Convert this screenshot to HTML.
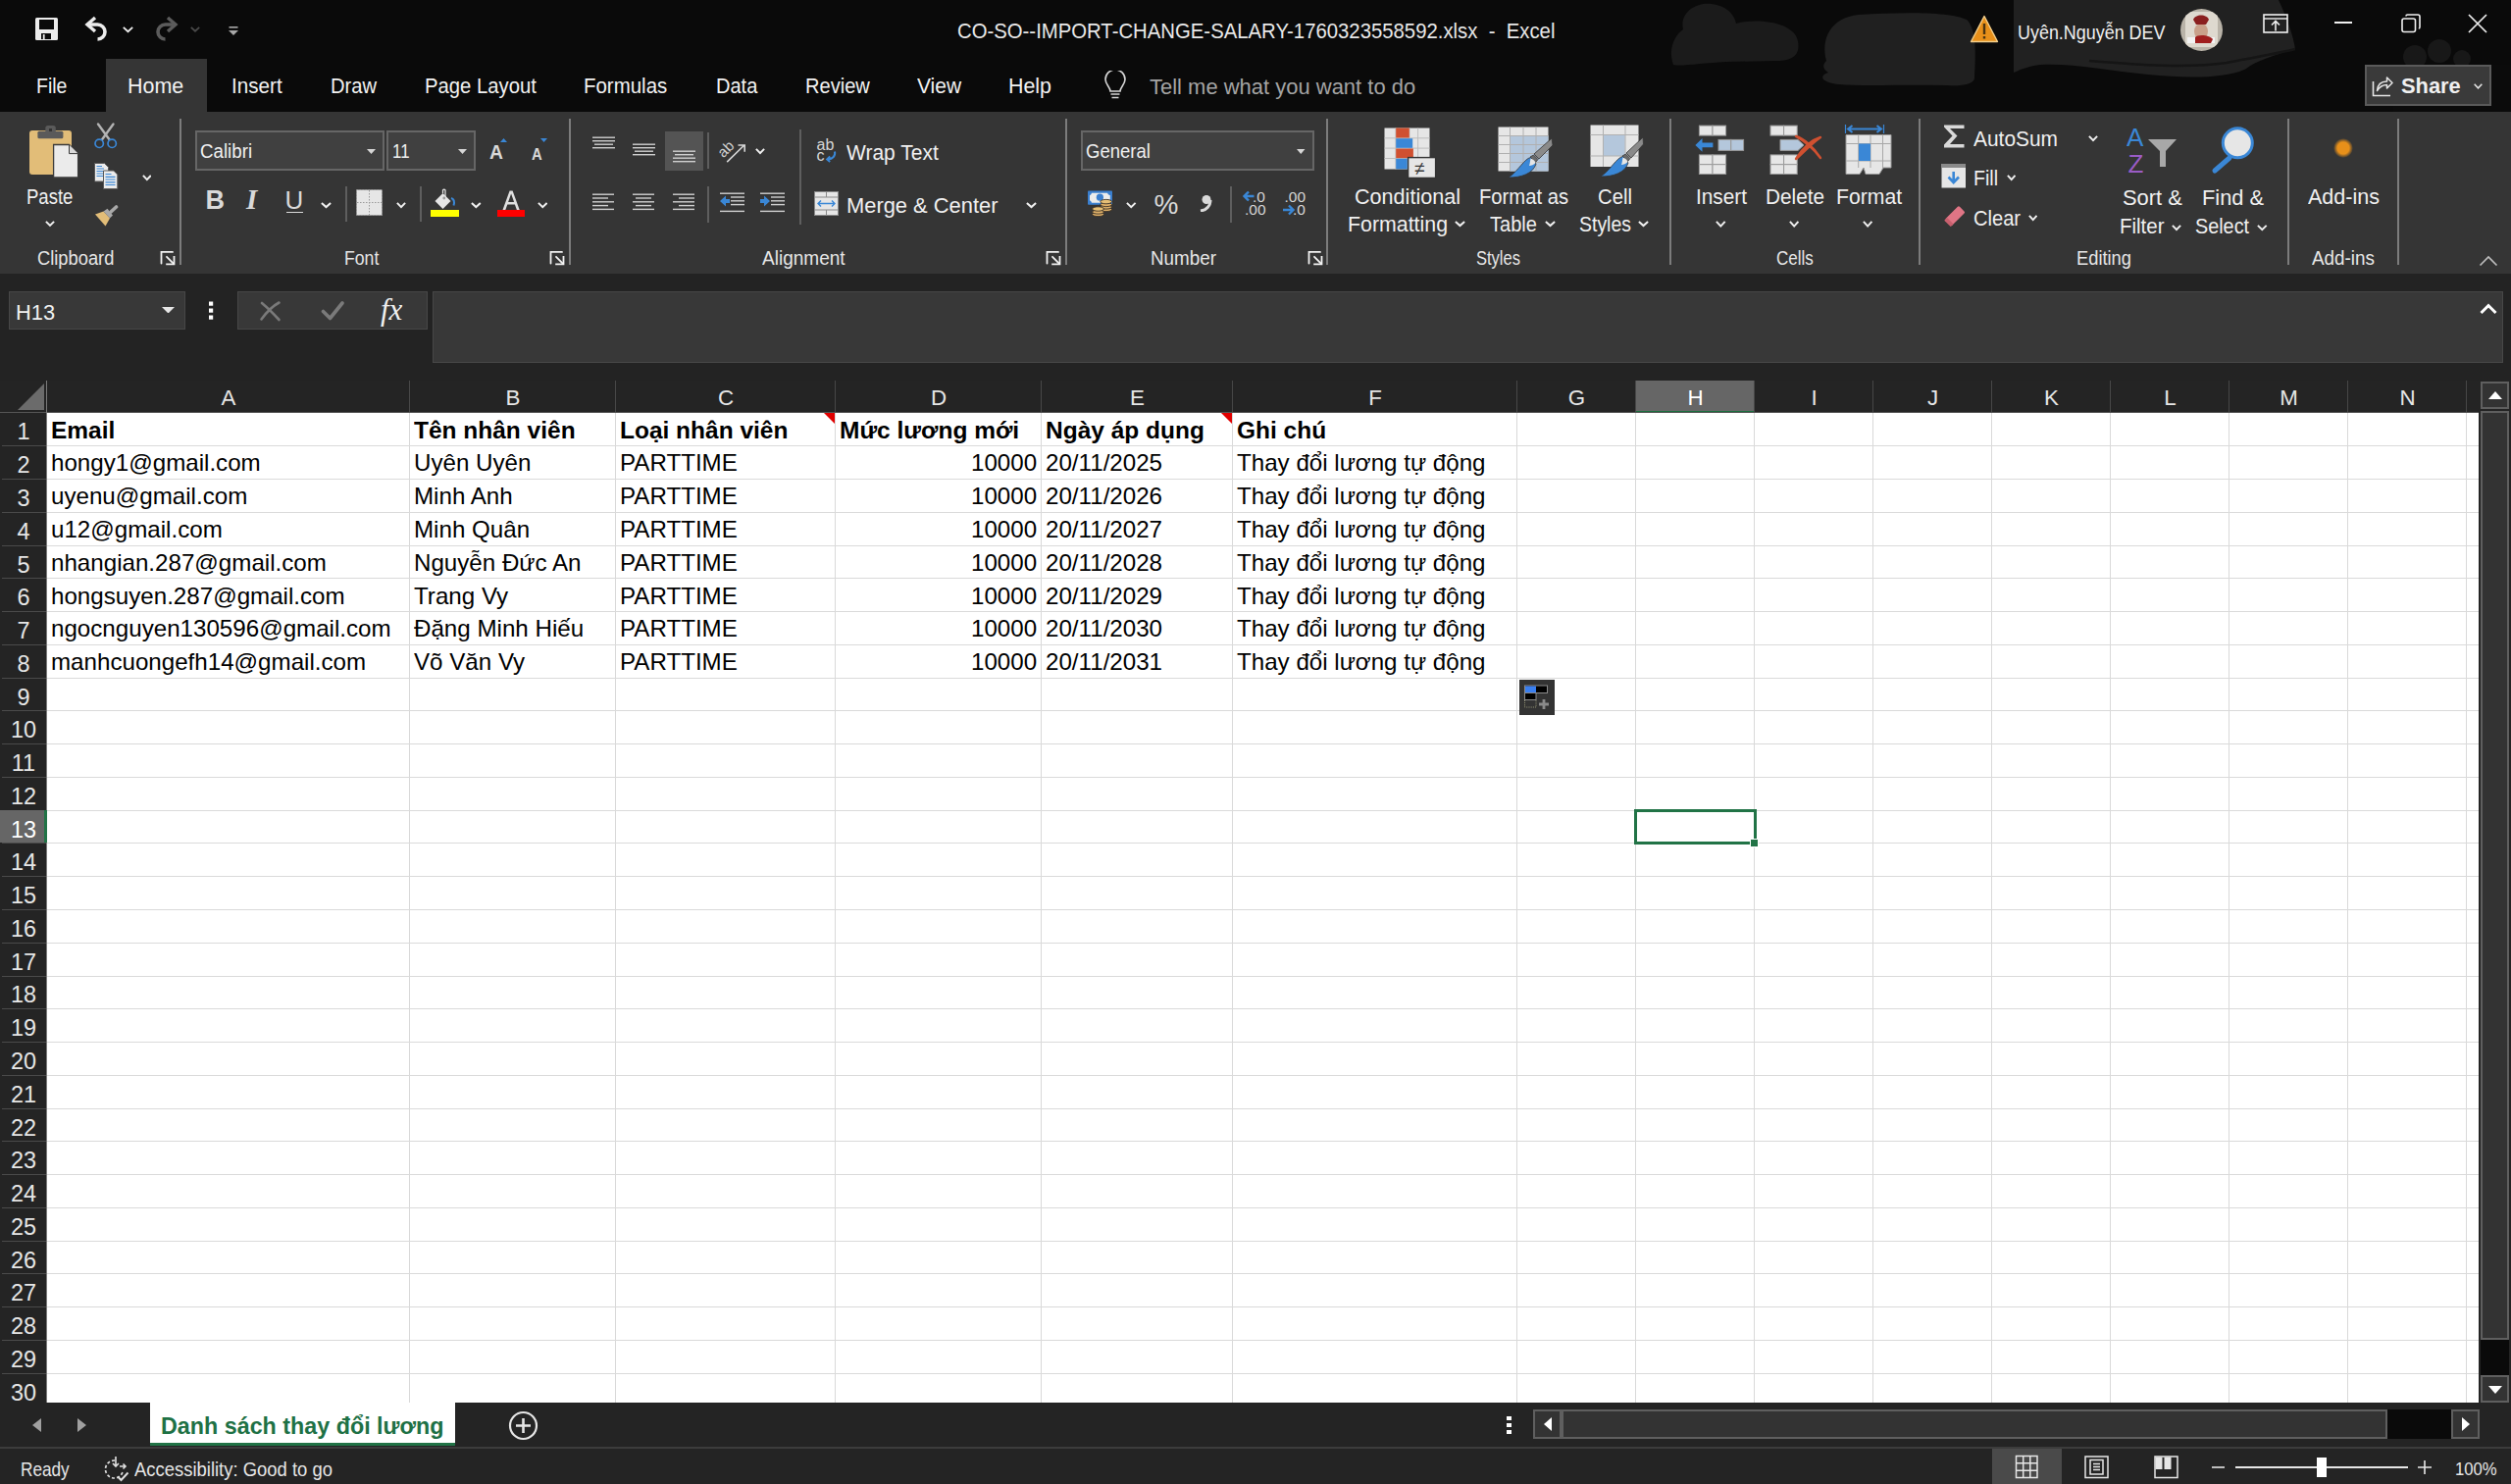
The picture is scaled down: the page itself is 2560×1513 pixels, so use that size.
<!DOCTYPE html><html><head><meta charset="utf-8"><style>
html,body{margin:0;padding:0;width:2560px;height:1513px;overflow:hidden;background:#0a0a0a;font-family:"Liberation Sans", sans-serif;}
body>div,body>svg{position:absolute;}
.t{position:absolute;white-space:pre;line-height:1;transform-origin:0 0;}
</style></head><body>
<div style="left:0px;top:0px;width:2560px;height:114px;background:#0a0a0a;"></div>
<svg style="left:1690px;top:0px" width="870" height="114" viewBox="0 0 870 114">
<path d="M16 66 C10 50 18 35 26 30 C22 12 40 2 55 4 C70 6 78 14 80 24 C100 18 140 22 143 42 C146 58 135 62 120 62 L70 63 C45 64 25 68 16 66 Z" fill="#1b1b1b"/>
<path d="M172 62 C166 40 176 18 205 15 C250 12 300 12 315 20 C326 30 324 60 323 80 C322 86 310 88 295 87 C250 86 210 88 185 86 C170 85 162 78 174 74 C168 70 168 66 172 62 Z" fill="#202020"/>
<path d="M363 0 L633 0 C640 15 648 35 650 50 C630 56 610 62 600 70 C580 80 540 80 500 76 C460 72 420 64 390 66 C375 68 368 72 363 74 Z" fill="#212121"/>
<path d="M440 62 C490 66 540 70 580 64 C610 58 635 54 650 50" stroke="#151515" stroke-width="2.5" fill="none"/>
<circle cx="772" cy="58" r="12" fill="#181818"/><circle cx="797" cy="52" r="12" fill="#181818"/><circle cx="820" cy="60" r="9" fill="#181818"/>
<rect x="750" y="66" width="120" height="48" fill="#0b0b0b"/>
</svg>
<div style="left:108px;top:60px;width:103px;height:54px;background:#353535;"></div>
<div style="left:0px;top:114px;width:2560px;height:165px;background:#353535;"></div>
<div style="left:0px;top:279px;width:2560px;height:109px;background:#232323;"></div>
<div class="t" style="left:976.00px;top:21.42px;font-size:21.74px;color:#e8e8e8;font-weight:400;transform:scaleX(0.9349);">CO-SO--IMPORT-CHANGE-SALARY-1760323558592.xlsx  -  Excel</div>
<div class="t" style="left:2057.00px;top:21.74px;font-size:21.01px;color:#f0f0f0;font-weight:400;transform:scaleX(0.8538);">Uyên.Nguyễn DEV</div>
<div class="t" style="left:36.50px;top:77.08px;font-size:22.61px;color:#f2f2f2;font-weight:400;transform:scaleX(0.8625);">File</div>
<div class="t" style="left:129.80px;top:77.08px;font-size:22.61px;color:#f2f2f2;font-weight:400;transform:scaleX(0.9489);">Home</div>
<div class="t" style="left:236.40px;top:77.08px;font-size:22.61px;color:#f2f2f2;font-weight:400;transform:scaleX(0.9130);">Insert</div>
<div class="t" style="left:337.00px;top:77.08px;font-size:22.61px;color:#f2f2f2;font-weight:400;transform:scaleX(0.8913);">Draw</div>
<div class="t" style="left:433.00px;top:77.08px;font-size:22.61px;color:#f2f2f2;font-weight:400;transform:scaleX(0.8968);">Page Layout</div>
<div class="t" style="left:595.40px;top:77.08px;font-size:22.61px;color:#f2f2f2;font-weight:400;transform:scaleX(0.9047);">Formulas</div>
<div class="t" style="left:729.70px;top:77.08px;font-size:22.61px;color:#f2f2f2;font-weight:400;transform:scaleX(0.8862);">Data</div>
<div class="t" style="left:821.00px;top:77.08px;font-size:22.61px;color:#f2f2f2;font-weight:400;transform:scaleX(0.8881);">Review</div>
<div class="t" style="left:935.00px;top:77.08px;font-size:22.61px;color:#f2f2f2;font-weight:400;transform:scaleX(0.9263);">View</div>
<div class="t" style="left:1028.00px;top:77.08px;font-size:22.61px;color:#f2f2f2;font-weight:400;transform:scaleX(0.9469);">Help</div>
<div class="t" style="left:1171.50px;top:77.58px;font-size:22.61px;color:#a4a4a4;font-weight:400;transform:scaleX(0.9720);">Tell me what you want to do</div>
<div style="left:183px;top:121px;width:2px;height:149px;background:#7c7c7c;"></div>
<div style="left:580px;top:121px;width:2px;height:149px;background:#7c7c7c;"></div>
<div style="left:1086px;top:121px;width:2px;height:149px;background:#7c7c7c;"></div>
<div style="left:1352px;top:121px;width:2px;height:149px;background:#7c7c7c;"></div>
<div style="left:1702px;top:121px;width:2px;height:149px;background:#7c7c7c;"></div>
<div style="left:1956px;top:121px;width:2px;height:149px;background:#7c7c7c;"></div>
<div style="left:2332px;top:121px;width:2px;height:149px;background:#7c7c7c;"></div>
<div style="left:2444px;top:121px;width:2px;height:149px;background:#7c7c7c;"></div>
<div class="t" style="left:37.60px;top:253.75px;font-size:19.71px;color:#e6e6e6;font-weight:400;transform:scaleX(0.9295);">Clipboard</div>
<div class="t" style="left:350.60px;top:253.75px;font-size:19.71px;color:#e6e6e6;font-weight:400;transform:scaleX(0.8976);">Font</div>
<div class="t" style="left:776.60px;top:253.75px;font-size:19.71px;color:#e6e6e6;font-weight:400;transform:scaleX(0.9666);">Alignment</div>
<div class="t" style="left:1173.00px;top:253.75px;font-size:19.71px;color:#e6e6e6;font-weight:400;transform:scaleX(0.9561);">Number</div>
<div class="t" style="left:1505.00px;top:253.75px;font-size:19.71px;color:#e6e6e6;font-weight:400;transform:scaleX(0.8387);">Styles</div>
<div class="t" style="left:1810.50px;top:253.75px;font-size:19.71px;color:#e6e6e6;font-weight:400;transform:scaleX(0.8631);">Cells</div>
<div class="t" style="left:2117.00px;top:253.75px;font-size:19.71px;color:#e6e6e6;font-weight:400;transform:scaleX(0.9295);">Editing</div>
<div class="t" style="left:2357.00px;top:253.75px;font-size:19.71px;color:#e6e6e6;font-weight:400;transform:scaleX(0.9579);">Add-ins</div>
<div class="t" style="left:27.40px;top:190.31px;font-size:22.46px;color:#f0f0f0;font-weight:400;transform:scaleX(0.8255);">Paste</div>
<div class="t" style="left:863.00px;top:145.42px;font-size:21.74px;color:#f0f0f0;font-weight:400;transform:scaleX(0.9661);">Wrap Text</div>
<div class="t" style="left:863.30px;top:199.22px;font-size:21.74px;color:#f0f0f0;font-weight:400;transform:scaleX(1.0071);">Merge &amp; Center</div>
<div class="t" style="left:1381.00px;top:189.81px;font-size:22.46px;color:#f0f0f0;font-weight:400;transform:scaleX(0.9613);">Conditional</div>
<div class="t" style="left:1374.00px;top:218.31px;font-size:22.46px;color:#f0f0f0;font-weight:400;transform:scaleX(0.9505);">Formatting</div>
<div class="t" style="left:1508.00px;top:189.81px;font-size:22.46px;color:#f0f0f0;font-weight:400;transform:scaleX(0.9004);">Format as</div>
<div class="t" style="left:1518.70px;top:218.31px;font-size:22.46px;color:#f0f0f0;font-weight:400;transform:scaleX(0.8922);">Table</div>
<div class="t" style="left:1629.00px;top:189.81px;font-size:22.46px;color:#f0f0f0;font-weight:400;transform:scaleX(0.9047);">Cell</div>
<div class="t" style="left:1610.00px;top:218.31px;font-size:22.46px;color:#f0f0f0;font-weight:400;transform:scaleX(0.8666);">Styles</div>
<div class="t" style="left:1729.00px;top:190.42px;font-size:21.74px;color:#f0f0f0;font-weight:400;transform:scaleX(0.9571);">Insert</div>
<div class="t" style="left:1800.00px;top:190.42px;font-size:21.74px;color:#f0f0f0;font-weight:400;transform:scaleX(0.9557);">Delete</div>
<div class="t" style="left:1872.00px;top:190.42px;font-size:21.74px;color:#f0f0f0;font-weight:400;transform:scaleX(0.9739);">Format</div>
<div class="t" style="left:2012.00px;top:130.88px;font-size:22.03px;color:#f0f0f0;font-weight:400;transform:scaleX(0.9496);">AutoSum</div>
<div class="t" style="left:2012.00px;top:171.42px;font-size:21.74px;color:#f0f0f0;font-weight:400;transform:scaleX(0.9009);">Fill</div>
<div class="t" style="left:2012.00px;top:212.42px;font-size:21.74px;color:#f0f0f0;font-weight:400;transform:scaleX(0.9247);">Clear</div>
<div class="t" style="left:2164.00px;top:191.11px;font-size:21.16px;color:#f0f0f0;font-weight:400;transform:scaleX(1.0349);">Sort &amp;</div>
<div class="t" style="left:2161.00px;top:219.81px;font-size:21.16px;color:#f0f0f0;font-weight:400;transform:scaleX(0.9684);">Filter</div>
<div class="t" style="left:2245.00px;top:191.11px;font-size:21.16px;color:#f0f0f0;font-weight:400;transform:scaleX(1.0309);">Find &amp;</div>
<div class="t" style="left:2237.50px;top:219.81px;font-size:21.16px;color:#f0f0f0;font-weight:400;transform:scaleX(0.9359);">Select</div>
<div class="t" style="left:2353.00px;top:190.18px;font-size:22.03px;color:#f0f0f0;font-weight:400;transform:scaleX(0.9778);">Add-ins</div>
<div style="left:9px;top:297px;width:180px;height:39px;background:#383838;box-sizing:border-box;border:1px solid #474747;"></div>
<div class="t" style="left:16.20px;top:307.52px;font-size:21.74px;color:#f0f0f0;font-weight:400;transform:scaleX(1.0039);">H13</div>
<div style="left:242px;top:297px;width:194px;height:39px;background:#383838;box-sizing:border-box;border:1px solid #474747;"></div>
<div style="left:441px;top:297px;width:2111px;height:73px;background:#383838;box-sizing:border-box;border:1px solid #474747;"></div>
<div style="left:0px;top:388px;width:2527px;height:33px;background:#242424;"></div>
<div style="left:1667px;top:388px;width:121px;height:33px;background:#666666;"></div>
<div style="left:1667px;top:388px;width:1px;height:31px;background:#8c8c8c;"></div>
<div style="left:1667px;top:419px;width:121px;height:2px;background:#1b6e3e;"></div>
<div class="t" style="left:225.56px;top:394.83px;font-size:22.32px;color:#e6e6e6;font-weight:400;">A</div>
<div class="t" style="left:515.56px;top:394.83px;font-size:22.32px;color:#e6e6e6;font-weight:400;">B</div>
<div class="t" style="left:731.95px;top:394.83px;font-size:22.32px;color:#e6e6e6;font-weight:400;">C</div>
<div class="t" style="left:948.95px;top:394.83px;font-size:22.32px;color:#e6e6e6;font-weight:400;">D</div>
<div class="t" style="left:1152.06px;top:394.83px;font-size:22.32px;color:#e6e6e6;font-weight:400;">E</div>
<div class="t" style="left:1395.19px;top:394.83px;font-size:22.32px;color:#e6e6e6;font-weight:400;">F</div>
<div class="t" style="left:1598.83px;top:394.83px;font-size:22.32px;color:#e6e6e6;font-weight:400;">G</div>
<div class="t" style="left:1720.45px;top:394.83px;font-size:22.32px;color:#ffffff;font-weight:400;">H</div>
<div class="t" style="left:1846.40px;top:394.83px;font-size:22.32px;color:#e6e6e6;font-weight:400;">I</div>
<div class="t" style="left:1964.92px;top:394.83px;font-size:22.32px;color:#e6e6e6;font-weight:400;">J</div>
<div class="t" style="left:2084.06px;top:394.83px;font-size:22.32px;color:#e6e6e6;font-weight:400;">K</div>
<div class="t" style="left:2206.30px;top:394.83px;font-size:22.32px;color:#e6e6e6;font-weight:400;">L</div>
<div class="t" style="left:2324.21px;top:394.83px;font-size:22.32px;color:#e6e6e6;font-weight:400;">M</div>
<div class="t" style="left:2446.45px;top:394.83px;font-size:22.32px;color:#e6e6e6;font-weight:400;">N</div>
<svg style="left:0px;top:388px;" width="2527" height="33" viewBox="0 0 2527 33"><rect x="417" y="0" width="1" height="33" fill="#474747"/><rect x="627" y="0" width="1" height="33" fill="#474747"/><rect x="851" y="0" width="1" height="33" fill="#474747"/><rect x="1061" y="0" width="1" height="33" fill="#474747"/><rect x="1256" y="0" width="1" height="33" fill="#474747"/><rect x="1546" y="0" width="1" height="33" fill="#474747"/><rect x="1667" y="0" width="1" height="33" fill="#474747"/><rect x="1788" y="0" width="1" height="33" fill="#474747"/><rect x="1909" y="0" width="1" height="33" fill="#474747"/><rect x="2030" y="0" width="1" height="33" fill="#474747"/><rect x="2151" y="0" width="1" height="33" fill="#474747"/><rect x="2272" y="0" width="1" height="33" fill="#474747"/><rect x="2393" y="0" width="1" height="33" fill="#474747"/><rect x="2514" y="0" width="1" height="33" fill="#474747"/></svg>
<div style="left:0px;top:420px;width:2527px;height:1px;background:#555555;"></div>
<svg style="left:18px;top:391px;" width="27" height="27" viewBox="0 0 27 27"><path d="M27 0 L27 27 L0 27 Z" fill="#6b6b6b"/></svg>
<div style="left:48px;top:421px;width:2479px;height:1009px;background:#ffffff;"></div>
<svg style="left:48px;top:421px;" width="2479" height="1009" viewBox="0 0 2479 1009"><rect x="369" y="0" width="1" height="1009" fill="#d9d9d9"/><rect x="579" y="0" width="1" height="1009" fill="#d9d9d9"/><rect x="803" y="0" width="1" height="1009" fill="#d9d9d9"/><rect x="1013" y="0" width="1" height="1009" fill="#d9d9d9"/><rect x="1208" y="0" width="1" height="1009" fill="#d9d9d9"/><rect x="1498" y="0" width="1" height="1009" fill="#d9d9d9"/><rect x="1619" y="0" width="1" height="1009" fill="#d9d9d9"/><rect x="1740" y="0" width="1" height="1009" fill="#d9d9d9"/><rect x="1861" y="0" width="1" height="1009" fill="#d9d9d9"/><rect x="1982" y="0" width="1" height="1009" fill="#d9d9d9"/><rect x="2103" y="0" width="1" height="1009" fill="#d9d9d9"/><rect x="2224" y="0" width="1" height="1009" fill="#d9d9d9"/><rect x="2345" y="0" width="1" height="1009" fill="#d9d9d9"/><rect x="2466" y="0" width="1" height="1009" fill="#d9d9d9"/><rect x="0" y="33" width="2479" height="1" fill="#dadada"/><rect x="0" y="67" width="2479" height="1" fill="#dadada"/><rect x="0" y="101" width="2479" height="1" fill="#dadada"/><rect x="0" y="135" width="2479" height="1" fill="#dadada"/><rect x="0" y="168" width="2479" height="1" fill="#dadada"/><rect x="0" y="202" width="2479" height="1" fill="#dadada"/><rect x="0" y="236" width="2479" height="1" fill="#dadada"/><rect x="0" y="270" width="2479" height="1" fill="#dadada"/><rect x="0" y="303" width="2479" height="1" fill="#dadada"/><rect x="0" y="337" width="2479" height="1" fill="#dadada"/><rect x="0" y="371" width="2479" height="1" fill="#dadada"/><rect x="0" y="405" width="2479" height="1" fill="#dadada"/><rect x="0" y="438" width="2479" height="1" fill="#dadada"/><rect x="0" y="472" width="2479" height="1" fill="#dadada"/><rect x="0" y="506" width="2479" height="1" fill="#dadada"/><rect x="0" y="540" width="2479" height="1" fill="#dadada"/><rect x="0" y="574" width="2479" height="1" fill="#dadada"/><rect x="0" y="607" width="2479" height="1" fill="#dadada"/><rect x="0" y="641" width="2479" height="1" fill="#dadada"/><rect x="0" y="675" width="2479" height="1" fill="#dadada"/><rect x="0" y="709" width="2479" height="1" fill="#dadada"/><rect x="0" y="742" width="2479" height="1" fill="#dadada"/><rect x="0" y="776" width="2479" height="1" fill="#dadada"/><rect x="0" y="810" width="2479" height="1" fill="#dadada"/><rect x="0" y="844" width="2479" height="1" fill="#dadada"/><rect x="0" y="877" width="2479" height="1" fill="#dadada"/><rect x="0" y="911" width="2479" height="1" fill="#dadada"/><rect x="0" y="945" width="2479" height="1" fill="#dadada"/><rect x="0" y="979" width="2479" height="1" fill="#dadada"/></svg>
<div style="left:0px;top:421px;width:47px;height:1009px;background:#242424;"></div>
<div style="left:47px;top:388px;width:1px;height:1042px;background:#7a7a7a;"></div>
<svg style="left:0px;top:421px;" width="47" height="1009" viewBox="0 0 47 1009"><rect x="2" y="33" width="45" height="1" fill="#4a4a4a"/><rect x="2" y="67" width="45" height="1" fill="#4a4a4a"/><rect x="2" y="101" width="45" height="1" fill="#4a4a4a"/><rect x="2" y="135" width="45" height="1" fill="#4a4a4a"/><rect x="2" y="168" width="45" height="1" fill="#4a4a4a"/><rect x="2" y="202" width="45" height="1" fill="#4a4a4a"/><rect x="2" y="236" width="45" height="1" fill="#4a4a4a"/><rect x="2" y="270" width="45" height="1" fill="#4a4a4a"/><rect x="2" y="303" width="45" height="1" fill="#4a4a4a"/><rect x="2" y="337" width="45" height="1" fill="#4a4a4a"/><rect x="2" y="371" width="45" height="1" fill="#4a4a4a"/><rect x="2" y="405" width="45" height="1" fill="#4a4a4a"/><rect x="2" y="438" width="45" height="1" fill="#4a4a4a"/><rect x="2" y="472" width="45" height="1" fill="#4a4a4a"/><rect x="2" y="506" width="45" height="1" fill="#4a4a4a"/><rect x="2" y="540" width="45" height="1" fill="#4a4a4a"/><rect x="2" y="574" width="45" height="1" fill="#4a4a4a"/><rect x="2" y="607" width="45" height="1" fill="#4a4a4a"/><rect x="2" y="641" width="45" height="1" fill="#4a4a4a"/><rect x="2" y="675" width="45" height="1" fill="#4a4a4a"/><rect x="2" y="709" width="45" height="1" fill="#4a4a4a"/><rect x="2" y="742" width="45" height="1" fill="#4a4a4a"/><rect x="2" y="776" width="45" height="1" fill="#4a4a4a"/><rect x="2" y="810" width="45" height="1" fill="#4a4a4a"/><rect x="2" y="844" width="45" height="1" fill="#4a4a4a"/><rect x="2" y="877" width="45" height="1" fill="#4a4a4a"/><rect x="2" y="911" width="45" height="1" fill="#4a4a4a"/><rect x="2" y="945" width="45" height="1" fill="#4a4a4a"/><rect x="2" y="979" width="45" height="1" fill="#4a4a4a"/></svg>
<div style="left:0px;top:826px;width:45px;height:33px;background:#666666;"></div>
<div style="left:45px;top:826px;width:3px;height:33px;background:#217346;"></div>
<div class="t" style="left:17.47px;top:429.44px;font-size:23.48px;color:#e6e6e6;font-weight:400;">1</div>
<div class="t" style="left:17.47px;top:463.21px;font-size:23.48px;color:#e6e6e6;font-weight:400;">2</div>
<div class="t" style="left:17.47px;top:496.98px;font-size:23.48px;color:#e6e6e6;font-weight:400;">3</div>
<div class="t" style="left:17.47px;top:530.74px;font-size:23.48px;color:#e6e6e6;font-weight:400;">4</div>
<div class="t" style="left:17.47px;top:564.51px;font-size:23.48px;color:#e6e6e6;font-weight:400;">5</div>
<div class="t" style="left:17.47px;top:598.27px;font-size:23.48px;color:#e6e6e6;font-weight:400;">6</div>
<div class="t" style="left:17.47px;top:632.04px;font-size:23.48px;color:#e6e6e6;font-weight:400;">7</div>
<div class="t" style="left:17.47px;top:665.81px;font-size:23.48px;color:#e6e6e6;font-weight:400;">8</div>
<div class="t" style="left:17.47px;top:699.57px;font-size:23.48px;color:#e6e6e6;font-weight:400;">9</div>
<div class="t" style="left:10.95px;top:733.34px;font-size:23.48px;color:#e6e6e6;font-weight:400;">10</div>
<div class="t" style="left:11.81px;top:767.10px;font-size:23.48px;color:#e6e6e6;font-weight:400;">11</div>
<div class="t" style="left:10.95px;top:800.87px;font-size:23.48px;color:#e6e6e6;font-weight:400;">12</div>
<div class="t" style="left:10.95px;top:834.64px;font-size:23.48px;color:#ffffff;font-weight:400;">13</div>
<div class="t" style="left:10.95px;top:868.40px;font-size:23.48px;color:#e6e6e6;font-weight:400;">14</div>
<div class="t" style="left:10.95px;top:902.17px;font-size:23.48px;color:#e6e6e6;font-weight:400;">15</div>
<div class="t" style="left:10.95px;top:935.93px;font-size:23.48px;color:#e6e6e6;font-weight:400;">16</div>
<div class="t" style="left:10.95px;top:969.70px;font-size:23.48px;color:#e6e6e6;font-weight:400;">17</div>
<div class="t" style="left:10.95px;top:1003.47px;font-size:23.48px;color:#e6e6e6;font-weight:400;">18</div>
<div class="t" style="left:10.95px;top:1037.23px;font-size:23.48px;color:#e6e6e6;font-weight:400;">19</div>
<div class="t" style="left:10.95px;top:1071.00px;font-size:23.48px;color:#e6e6e6;font-weight:400;">20</div>
<div class="t" style="left:10.95px;top:1104.76px;font-size:23.48px;color:#e6e6e6;font-weight:400;">21</div>
<div class="t" style="left:10.95px;top:1138.53px;font-size:23.48px;color:#e6e6e6;font-weight:400;">22</div>
<div class="t" style="left:10.95px;top:1172.30px;font-size:23.48px;color:#e6e6e6;font-weight:400;">23</div>
<div class="t" style="left:10.95px;top:1206.06px;font-size:23.48px;color:#e6e6e6;font-weight:400;">24</div>
<div class="t" style="left:10.95px;top:1239.83px;font-size:23.48px;color:#e6e6e6;font-weight:400;">25</div>
<div class="t" style="left:10.95px;top:1273.59px;font-size:23.48px;color:#e6e6e6;font-weight:400;">26</div>
<div class="t" style="left:10.95px;top:1307.36px;font-size:23.48px;color:#e6e6e6;font-weight:400;">27</div>
<div class="t" style="left:10.95px;top:1341.13px;font-size:23.48px;color:#e6e6e6;font-weight:400;">28</div>
<div class="t" style="left:10.95px;top:1374.89px;font-size:23.48px;color:#e6e6e6;font-weight:400;">29</div>
<div class="t" style="left:10.95px;top:1408.66px;font-size:23.48px;color:#e6e6e6;font-weight:400;">30</div>
<div class="t" style="left:51.60px;top:426.67px;font-size:24.00px;color:#000000;font-weight:700;transform:scaleX(1.0200);">Email</div>
<div class="t" style="left:421.60px;top:426.67px;font-size:24.00px;color:#000000;font-weight:700;transform:scaleX(1.0200);">Tên nhân viên</div>
<div class="t" style="left:631.60px;top:426.67px;font-size:24.00px;color:#000000;font-weight:700;transform:scaleX(1.0200);">Loại nhân viên</div>
<div class="t" style="left:855.60px;top:426.67px;font-size:24.00px;color:#000000;font-weight:700;transform:scaleX(1.0200);">Mức lương mới</div>
<div class="t" style="left:1065.60px;top:426.67px;font-size:24.00px;color:#000000;font-weight:700;transform:scaleX(1.0200);">Ngày áp dụng</div>
<div class="t" style="left:1260.60px;top:426.67px;font-size:24.00px;color:#000000;font-weight:700;transform:scaleX(1.0200);">Ghi chú</div>
<div class="t" style="left:51.60px;top:460.43px;font-size:24.00px;color:#000000;font-weight:400;transform:scaleX(1.0060);">hongy1@gmail.com</div>
<div class="t" style="left:421.60px;top:460.43px;font-size:24.00px;color:#000000;font-weight:400;transform:scaleX(1.0060);">Uyên Uyên</div>
<div class="t" style="left:631.60px;top:460.43px;font-size:24.00px;color:#000000;font-weight:400;transform:scaleX(1.0060);">PARTTIME</div>
<div class="t" style="left:990.25px;top:460.43px;font-size:24.00px;color:#000000;font-weight:400;transform:scaleX(1.0060);">10000</div>
<div class="t" style="left:1065.60px;top:460.43px;font-size:24.00px;color:#000000;font-weight:400;transform:scaleX(1.0060);">20/11/2025</div>
<div class="t" style="left:1260.60px;top:460.43px;font-size:24.00px;color:#000000;font-weight:400;transform:scaleX(1.0060);">Thay đổi lương tự động</div>
<div class="t" style="left:51.60px;top:494.20px;font-size:24.00px;color:#000000;font-weight:400;transform:scaleX(1.0060);">uyenu@gmail.com</div>
<div class="t" style="left:421.60px;top:494.20px;font-size:24.00px;color:#000000;font-weight:400;transform:scaleX(1.0060);">Minh Anh</div>
<div class="t" style="left:631.60px;top:494.20px;font-size:24.00px;color:#000000;font-weight:400;transform:scaleX(1.0060);">PARTTIME</div>
<div class="t" style="left:990.25px;top:494.20px;font-size:24.00px;color:#000000;font-weight:400;transform:scaleX(1.0060);">10000</div>
<div class="t" style="left:1065.60px;top:494.20px;font-size:24.00px;color:#000000;font-weight:400;transform:scaleX(1.0060);">20/11/2026</div>
<div class="t" style="left:1260.60px;top:494.20px;font-size:24.00px;color:#000000;font-weight:400;transform:scaleX(1.0060);">Thay đổi lương tự động</div>
<div class="t" style="left:51.60px;top:527.96px;font-size:24.00px;color:#000000;font-weight:400;transform:scaleX(1.0060);">u12@gmail.com</div>
<div class="t" style="left:421.60px;top:527.96px;font-size:24.00px;color:#000000;font-weight:400;transform:scaleX(1.0060);">Minh Quân</div>
<div class="t" style="left:631.60px;top:527.96px;font-size:24.00px;color:#000000;font-weight:400;transform:scaleX(1.0060);">PARTTIME</div>
<div class="t" style="left:990.25px;top:527.96px;font-size:24.00px;color:#000000;font-weight:400;transform:scaleX(1.0060);">10000</div>
<div class="t" style="left:1065.60px;top:527.96px;font-size:24.00px;color:#000000;font-weight:400;transform:scaleX(1.0060);">20/11/2027</div>
<div class="t" style="left:1260.60px;top:527.96px;font-size:24.00px;color:#000000;font-weight:400;transform:scaleX(1.0060);">Thay đổi lương tự động</div>
<div class="t" style="left:51.60px;top:561.73px;font-size:24.00px;color:#000000;font-weight:400;transform:scaleX(1.0060);">nhangian.287@gmail.com</div>
<div class="t" style="left:421.60px;top:561.73px;font-size:24.00px;color:#000000;font-weight:400;transform:scaleX(1.0060);">Nguyễn Đức An</div>
<div class="t" style="left:631.60px;top:561.73px;font-size:24.00px;color:#000000;font-weight:400;transform:scaleX(1.0060);">PARTTIME</div>
<div class="t" style="left:990.25px;top:561.73px;font-size:24.00px;color:#000000;font-weight:400;transform:scaleX(1.0060);">10000</div>
<div class="t" style="left:1065.60px;top:561.73px;font-size:24.00px;color:#000000;font-weight:400;transform:scaleX(1.0060);">20/11/2028</div>
<div class="t" style="left:1260.60px;top:561.73px;font-size:24.00px;color:#000000;font-weight:400;transform:scaleX(1.0060);">Thay đổi lương tự động</div>
<div class="t" style="left:51.60px;top:595.50px;font-size:24.00px;color:#000000;font-weight:400;transform:scaleX(1.0060);">hongsuyen.287@gmail.com</div>
<div class="t" style="left:421.60px;top:595.50px;font-size:24.00px;color:#000000;font-weight:400;transform:scaleX(1.0060);">Trang Vy</div>
<div class="t" style="left:631.60px;top:595.50px;font-size:24.00px;color:#000000;font-weight:400;transform:scaleX(1.0060);">PARTTIME</div>
<div class="t" style="left:990.25px;top:595.50px;font-size:24.00px;color:#000000;font-weight:400;transform:scaleX(1.0060);">10000</div>
<div class="t" style="left:1065.60px;top:595.50px;font-size:24.00px;color:#000000;font-weight:400;transform:scaleX(1.0060);">20/11/2029</div>
<div class="t" style="left:1260.60px;top:595.50px;font-size:24.00px;color:#000000;font-weight:400;transform:scaleX(1.0060);">Thay đổi lương tự động</div>
<div class="t" style="left:51.60px;top:629.26px;font-size:24.00px;color:#000000;font-weight:400;transform:scaleX(1.0060);">ngocnguyen130596@gmail.com</div>
<div class="t" style="left:421.60px;top:629.26px;font-size:24.00px;color:#000000;font-weight:400;transform:scaleX(1.0060);">Đặng Minh Hiếu</div>
<div class="t" style="left:631.60px;top:629.26px;font-size:24.00px;color:#000000;font-weight:400;transform:scaleX(1.0060);">PARTTIME</div>
<div class="t" style="left:990.25px;top:629.26px;font-size:24.00px;color:#000000;font-weight:400;transform:scaleX(1.0060);">10000</div>
<div class="t" style="left:1065.60px;top:629.26px;font-size:24.00px;color:#000000;font-weight:400;transform:scaleX(1.0060);">20/11/2030</div>
<div class="t" style="left:1260.60px;top:629.26px;font-size:24.00px;color:#000000;font-weight:400;transform:scaleX(1.0060);">Thay đổi lương tự động</div>
<div class="t" style="left:51.60px;top:663.03px;font-size:24.00px;color:#000000;font-weight:400;transform:scaleX(1.0060);">manhcuongefh14@gmail.com</div>
<div class="t" style="left:421.60px;top:663.03px;font-size:24.00px;color:#000000;font-weight:400;transform:scaleX(1.0060);">Võ Văn Vy</div>
<div class="t" style="left:631.60px;top:663.03px;font-size:24.00px;color:#000000;font-weight:400;transform:scaleX(1.0060);">PARTTIME</div>
<div class="t" style="left:990.25px;top:663.03px;font-size:24.00px;color:#000000;font-weight:400;transform:scaleX(1.0060);">10000</div>
<div class="t" style="left:1065.60px;top:663.03px;font-size:24.00px;color:#000000;font-weight:400;transform:scaleX(1.0060);">20/11/2031</div>
<div class="t" style="left:1260.60px;top:663.03px;font-size:24.00px;color:#000000;font-weight:400;transform:scaleX(1.0060);">Thay đổi lương tự động</div>
<svg style="left:840px;top:421px;" width="11" height="11" viewBox="0 0 11 11"><path d="M0 0 L11 0 L11 11 Z" fill="#e00000"/></svg>
<svg style="left:1245px;top:421px;" width="11" height="11" viewBox="0 0 11 11"><path d="M0 0 L11 0 L11 11 Z" fill="#e00000"/></svg>
<div style="left:1666px;top:825px;width:125px;height:36px;background:transparent;box-sizing:border-box;border:3px solid #217346;"></div>
<div style="left:1785px;top:856px;width:7px;height:7px;background:#217346;outline:1px solid #fff;"></div>
<div style="left:2527px;top:388px;width:33px;height:1042px;background:#242424;"></div>
<div style="left:2529px;top:389px;width:29px;height:28px;background:#333333;box-sizing:border-box;border:2px solid #5f5f5f;"></div>
<div style="left:2529px;top:419px;width:29px;height:947px;background:#333333;box-sizing:border-box;border:2px solid #5f5f5f;"></div>
<div style="left:2529px;top:1366px;width:29px;height:36px;background:#0a0a0a;"></div>
<div style="left:2529px;top:1402px;width:29px;height:28px;background:#333333;box-sizing:border-box;border:2px solid #5f5f5f;"></div>
<svg style="left:2537px;top:399px;" width="14" height="8" viewBox="0 0 14 8"><path d="M7 0 L14 8 L0 8 Z" fill="#ffffff"/></svg>
<svg style="left:2537px;top:1413px;" width="14" height="8" viewBox="0 0 14 8"><path d="M0 0 L14 0 L7 8 Z" fill="#ffffff"/></svg>
<div style="left:0px;top:1430px;width:2560px;height:46px;background:#242424;"></div>
<div style="left:153px;top:1430px;width:311px;height:43px;background:#ffffff;"></div>
<div style="left:153px;top:1471px;width:311px;height:3px;background:#217346;"></div>
<div class="t" style="left:164.40px;top:1443.19px;font-size:23.19px;color:#1e7145;font-weight:700;transform:scaleX(1.0049);">Danh sách thay đổi lương</div>
<svg style="left:33px;top:1446px;" width="9" height="14" viewBox="0 0 9 14"><path d="M9 0 L9 14 L0 7 Z" fill="#a0a0a0"/></svg>
<svg style="left:79px;top:1446px;" width="9" height="14" viewBox="0 0 9 14"><path d="M0 0 L9 7 L0 14 Z" fill="#a0a0a0"/></svg>
<svg style="left:518px;top:1438px;" width="31" height="31" viewBox="0 0 31 31"><circle cx="15.5" cy="15.5" r="13.5" stroke="#e6e6e6" stroke-width="2.2" fill="none"/><path d="M15.5 8 V23 M8 15.5 H23" stroke="#e6e6e6" stroke-width="2.6"/></svg>
<svg style="left:1536px;top:1444px;" width="6" height="19" viewBox="0 0 6 19"><rect x="0" y="0" width="5" height="4" fill="#fff"/><rect x="0" y="7" width="5" height="4" fill="#fff"/><rect x="0" y="14" width="5" height="4" fill="#fff"/></svg>
<div style="left:1563px;top:1437px;width:29px;height:30px;background:#333333;box-sizing:border-box;border:2px solid #5f5f5f;"></div>
<div style="left:1592px;top:1437px;width:842px;height:30px;background:#333333;box-sizing:border-box;border:2px solid #5f5f5f;"></div>
<div style="left:2434px;top:1437px;width:65px;height:30px;background:#0a0a0a;"></div>
<div style="left:2499px;top:1437px;width:29px;height:30px;background:#333333;box-sizing:border-box;border:2px solid #5f5f5f;"></div>
<svg style="left:1574px;top:1445px;" width="8" height="14" viewBox="0 0 8 14"><path d="M8 0 L8 14 L0 7 Z" fill="#fff"/></svg>
<svg style="left:2510px;top:1445px;" width="8" height="14" viewBox="0 0 8 14"><path d="M0 0 L8 7 L0 14 Z" fill="#fff"/></svg>
<div style="left:0px;top:1475px;width:2560px;height:38px;background:#242424;"></div>
<div style="left:0px;top:1475px;width:2560px;height:2px;background:#3c3c3c;"></div>
<div class="t" style="left:21.20px;top:1488.15px;font-size:20.29px;color:#e6e6e6;font-weight:400;transform:scaleX(0.8482);">Ready</div>
<div class="t" style="left:136.50px;top:1488.15px;font-size:20.29px;color:#e6e6e6;font-weight:400;transform:scaleX(0.9094);">Accessibility: Good to go</div>
<div style="left:2031px;top:1477px;width:71px;height:36px;background:#4a4a4a;"></div>
<div class="t" style="left:2502.80px;top:1488.89px;font-size:18.84px;color:#e6e6e6;font-weight:400;transform:scaleX(0.8846);">100%</div>
<div style="left:2279px;top:1495px;width:176px;height:2px;background:#e6e6e6;"></div>
<div style="left:2362px;top:1486px;width:10px;height:20px;background:#ffffff;"></div>
<div style="left:2255px;top:1495px;width:13px;height:2px;background:#bdbdbd;"></div>
<svg style="left:2465px;top:1489px;" width="14" height="14" viewBox="0 0 14 14"><path d="M7 0 V14 M0 7 H14" stroke="#e6e6e6" stroke-width="1.6"/></svg>
<svg style="left:36px;top:18px;" width="23" height="23" viewBox="0 0 23 23"><rect x="0" y="0" width="23" height="23" rx="1.5" fill="#ececec"/><rect x="4" y="2" width="15" height="10" fill="#0a0a0a"/><rect x="6" y="16" width="10" height="6" fill="#0a0a0a"/><rect x="7.8" y="17" width="1.8" height="5" fill="#ececec"/></svg>
<svg style="left:86px;top:16px;" width="26" height="26" viewBox="0 0 26 26"><path d="M4 9 H13.5 A7.5 7.5 0 0 1 13.5 24" fill="none" stroke="#ececec" stroke-width="3.6"/><polyline points="11,2 3,9 11,16" fill="none" stroke="#ececec" stroke-width="3.4" stroke-linejoin="miter"/></svg>
<svg style="left:124.5px;top:27px;" width="11" height="7" viewBox="0 0 11 7"><polyline points="0.81,0.81 5.5,5.1899999999999995 10.19,0.81" fill="none" stroke="#f0f0f0" stroke-width="1.8"/></svg>
<svg style="left:156px;top:16px;" width="26" height="26" viewBox="0 0 26 26"><path d="M22 9 H12.5 A7.5 7.5 0 0 0 12.5 24" fill="none" stroke="#5c5c5c" stroke-width="3.6"/><polyline points="15,2 23,9 15,16" fill="none" stroke="#5c5c5c" stroke-width="3.4" stroke-linejoin="miter"/></svg>
<svg style="left:194px;top:27px;" width="10" height="6.5" viewBox="0 0 10 6.5"><polyline points="0.81,0.81 5.0,4.6899999999999995 9.19,0.81" fill="none" stroke="#4a4a4a" stroke-width="1.8"/></svg>
<svg style="left:233px;top:27px;" width="10" height="9" viewBox="0 0 10 9"><rect x="0.5" y="0" width="9" height="1.6" fill="#a8a8a8"/><path d="M0 4 H10 L5 9 Z" fill="#a8a8a8"/></svg>
<svg style="left:28px;top:126px;" width="54" height="57" viewBox="0 0 54 57"><rect x="2" y="7" width="43" height="45" rx="3" fill="#e2bd78"/>
<rect x="10.4" y="7.8" width="26" height="7.4" rx="1.5" fill="#5a5a5a"/>
<rect x="18.3" y="2.1" width="10.5" height="8" rx="2.5" fill="#5a5a5a"/>
<rect x="22" y="5" width="3" height="3" fill="#333"/>
<path d="M26.6 21.5 H42.5 L51.6 30.6 V55 H26.6 Z" fill="#ebebeb" stroke="#3b3b3b" stroke-width="1.3"/>
<path d="M42.5 21.5 V30.6 H51.6" fill="#d9d9d9" stroke="#3b3b3b" stroke-width="1"/></svg>
<svg style="left:45.7px;top:225px;" width="10" height="6.8" viewBox="0 0 10 6.8"><polyline points="0.9,0.9 5.0,4.8999999999999995 9.1,0.9" fill="none" stroke="#f0f0f0" stroke-width="2.0"/></svg>
<svg style="left:95px;top:124px;" width="26" height="30" viewBox="0 0 26 30"><path d="M8.5 19 L20.5 2.5 M17 19 L5 2.5" stroke="#b3b3b3" stroke-width="2.4" stroke-linecap="round"/>
<circle cx="6.2" cy="22.3" r="4.2" fill="#333" stroke="#3a87d6" stroke-width="1.7"/>
<circle cx="19.2" cy="22.3" r="4.2" fill="#333" stroke="#3a87d6" stroke-width="1.7"/></svg>
<svg style="left:95px;top:165px;" width="27" height="30" viewBox="0 0 27 30"><path d="M1.5 1.5 H11.5 L15.5 5.5 V20 H1.5 Z" fill="#ececec" stroke="#5a5a5a" stroke-width="1"/>
<path d="M3.5 4.5 H9 M3.5 7 H11 M3.5 9.5 H11 M3.5 12 H11 M3.5 14.5 H11" stroke="#3a87d6" stroke-width="1.1"/>
<path d="M10.5 9 H20.8 L24.8 13 V27.5 H10.5 Z" fill="#ececec" stroke="#5a5a5a" stroke-width="1"/>
<path d="M12.5 12.5 H18.5 M12.5 15.3 H22.5 M12.5 18 H22.5 M12.5 20.8 H22.5 M12.5 23.5 H22.5" stroke="#3a87d6" stroke-width="1.2"/></svg>
<svg style="left:96px;top:209px;" width="26" height="24" viewBox="0 0 26 24"><path d="M1 9.5 L9.5 6.5 L16 13.5 L11.5 21.5 Z" fill="#e2bd78"/>
<path d="M9.5 6.5 L13.5 3.8 L19 10.5 L16 13.5 Z" fill="#a8a8a8"/>
<path d="M17 7 L22.5 2" stroke="#a8a8a8" stroke-width="3.6" stroke-linecap="round"/></svg>
<svg style="left:144.5px;top:178px;" width="9.7" height="7" viewBox="0 0 9.7 7"><polyline points="0.9,0.9 4.85,5.1 8.799999999999999,0.9" fill="none" stroke="#f0f0f0" stroke-width="2.0"/></svg>
<svg style="left:162.5px;top:255px;" width="17" height="17" viewBox="0 0 17 17"><path d="M1.5 13.5 V1.9 H13" fill="none" stroke="#f2f2f2" stroke-width="1.8" stroke-linecap="round"/><path d="M7 6.8 L14 13.8" stroke="#f2f2f2" stroke-width="1.8" stroke-linecap="round"/><path d="M6.2 14.3 H14.5 V6" fill="none" stroke="#f2f2f2" stroke-width="1.8"/></svg>
<div style="left:199px;top:133px;width:193px;height:41px;background:#404040;box-sizing:border-box;border:2px solid #666666;"></div>
<div style="left:394px;top:133px;width:91px;height:41px;background:#404040;box-sizing:border-box;border:2px solid #666666;"></div>
<div class="t" style="left:204.00px;top:144.41px;font-size:20.58px;color:#f0f0f0;font-weight:400;transform:scaleX(0.9094);">Calibri</div>
<div class="t" style="left:400.00px;top:144.41px;font-size:20.58px;color:#f0f0f0;font-weight:400;transform:scaleX(0.8193);">11</div>
<svg style="left:374px;top:152px;" width="9" height="5" viewBox="0 0 9 5"><path d="M0 0 H9 L4.5 5 Z" fill="#d6d6d6"/></svg>
<svg style="left:467px;top:152px;" width="9" height="5" viewBox="0 0 9 5"><path d="M0 0 H9 L4.5 5 Z" fill="#d6d6d6"/></svg>
<div class="t" style="left:498.5px;top:143.5px;font-size:21px;font-weight:700;color:#d9d9d9;transform:scaleX(0.92);transform-origin:0 0">A</div>
<svg style="left:510px;top:140.5px;" width="7" height="4" viewBox="0 0 7 4"><path d="M0 4 L3.5 0 L7 4 Z" fill="#3a87d6"/></svg>
<div class="t" style="left:541.5px;top:148.5px;font-size:16.5px;font-weight:700;color:#d9d9d9;transform:scaleX(0.9);transform-origin:0 0">A</div>
<svg style="left:551px;top:140.5px;" width="7" height="4" viewBox="0 0 7 4"><path d="M0 0 L7 0 L3.5 4 Z" fill="#3a87d6"/></svg>
<div class="t" style="left:209.5px;top:190.5px;font-size:27px;font-weight:700;color:#d9d9d9;">B</div>
<div class="t" style="left:251px;top:189px;font-size:29px;font-style:italic;font-weight:700;font-family:'Liberation Serif';color:#d9d9d9;">I</div>
<div class="t" style="left:290.5px;top:190.5px;font-size:26px;color:#d9d9d9;">U</div>
<div style="left:291.5px;top:215.5px;width:17px;height:1.5px;background:#d9d9d9;"></div>
<svg style="left:327px;top:205.5px;" width="11" height="7" viewBox="0 0 11 7"><polyline points="0.9,0.9 5.5,5.1 10.1,0.9" fill="none" stroke="#f0f0f0" stroke-width="2.0"/></svg>
<div style="left:352px;top:190px;width:2px;height:36px;background:#5e5e5e;"></div>
<svg style="left:363px;top:193px;" width="27" height="27" viewBox="0 0 27 27"><rect x="0.5" y="0.5" width="26" height="26" fill="#e6e6e6"/><path d="M13.5 1 V26 M1 13.5 H26" stroke="#9a9a9a" stroke-width="1" stroke-dasharray="1.5 1.5"/><rect x="0.5" y="0.5" width="26" height="26" fill="none" stroke="#9a9a9a" stroke-width="1" stroke-dasharray="1.5 1.5"/></svg>
<svg style="left:404px;top:205.5px;" width="10" height="7" viewBox="0 0 10 7"><polyline points="0.9,0.9 5.0,5.1 9.1,0.9" fill="none" stroke="#f0f0f0" stroke-width="2.0"/></svg>
<div style="left:428px;top:190px;width:2px;height:36px;background:#5e5e5e;"></div>
<svg style="left:438px;top:192px;" width="32" height="30" viewBox="0 0 32 30"><path d="M5.5 13 L13.5 5 L21.5 13 L13.5 21 Z" fill="#e6e6e6"/>
<path d="M13.5 5 V1.8 A1.5 1.5 0 0 1 16 1.8 V9.5" fill="none" stroke="#e6e6e6" stroke-width="1.2"/>
<circle cx="14.8" cy="10" r="1.4" fill="#9a9a9a"/>
<path d="M22 10 C25 11 25.5 14 24.5 17.5" fill="none" stroke="#3a87d6" stroke-width="2"/>
<rect x="1" y="22" width="29" height="7" fill="#ffff00"/></svg>
<svg style="left:480px;top:205.5px;" width="10.7" height="7" viewBox="0 0 10.7 7"><polyline points="0.9,0.9 5.35,5.1 9.799999999999999,0.9" fill="none" stroke="#f0f0f0" stroke-width="2.0"/></svg>
<svg style="left:506px;top:193px;" width="31" height="29" viewBox="0 0 31 29"><path d="M6.5 21 L13.6 1.5 H16.6 L23.7 21 H20.9 L18.9 15.5 H11.3 L9.3 21 Z M12.1 12.9 H18.1 L15.1 4.6 Z" fill="#e0e0e0" fill-rule="evenodd"/><rect x="1" y="21" width="28" height="7" fill="#ff0000"/></svg>
<svg style="left:547.6px;top:205.5px;" width="10.5" height="7" viewBox="0 0 10.5 7"><polyline points="0.9,0.9 5.25,5.1 9.6,0.9" fill="none" stroke="#f0f0f0" stroke-width="2.0"/></svg>
<svg style="left:559.5px;top:255px;" width="17" height="17" viewBox="0 0 17 17"><path d="M1.5 13.5 V1.9 H13" fill="none" stroke="#f2f2f2" stroke-width="1.8" stroke-linecap="round"/><path d="M7 6.8 L14 13.8" stroke="#f2f2f2" stroke-width="1.8" stroke-linecap="round"/><path d="M6.2 14.3 H14.5 V6" fill="none" stroke="#f2f2f2" stroke-width="1.8"/></svg>
<svg style="left:604px;top:139px;" width="30" height="30" viewBox="0 0 30 30"><rect x="0" y="0.5" width="23" height="1.4" fill="#cfcfcf"/><rect x="0" y="4" width="23" height="1.4" fill="#cfcfcf"/><rect x="2" y="7.5" width="19" height="1.4" fill="#cfcfcf"/><rect x="0" y="11" width="23" height="1.4" fill="#cfcfcf"/></svg>
<svg style="left:645px;top:145.5px;" width="30" height="30" viewBox="0 0 30 30"><rect x="0" y="0.5" width="23" height="1.4" fill="#cfcfcf"/><rect x="0" y="4" width="23" height="1.4" fill="#cfcfcf"/><rect x="2" y="7.5" width="19" height="1.4" fill="#cfcfcf"/><rect x="0" y="11" width="23" height="1.4" fill="#cfcfcf"/></svg>
<div style="left:677.5px;top:133.5px;width:39px;height:40px;background:#545454;"></div>
<svg style="left:685.5px;top:153px;" width="30" height="30" viewBox="0 0 30 30"><rect x="0" y="0.5" width="23" height="1.4" fill="#cfcfcf"/><rect x="2" y="4" width="19" height="1.4" fill="#cfcfcf"/><rect x="0" y="7.5" width="23" height="1.4" fill="#cfcfcf"/><rect x="0" y="11" width="23" height="1.4" fill="#cfcfcf"/></svg>
<div style="left:721px;top:135px;width:2px;height:37px;background:#5e5e5e;"></div>
<svg style="left:733px;top:141px;" width="28" height="26" viewBox="0 0 28 26"><text x="0" y="0" font-family="Liberation Sans" font-size="15" fill="#d0d0d0" transform="translate(4.5,20.5) rotate(-45)">ab</text>
<path d="M8.2 24.1 L25.5 7.3 M19.5 7 H26.2 V13.8" fill="none" stroke="#d6d6d6" stroke-width="1.6"/></svg>
<svg style="left:770px;top:151px;" width="10" height="7" viewBox="0 0 10 7"><polyline points="0.9,0.9 5.0,5.1 9.1,0.9" fill="none" stroke="#f0f0f0" stroke-width="2.0"/></svg>
<div style="left:815px;top:132px;width:2px;height:97px;background:#5e5e5e;"></div>
<svg style="left:832px;top:140px;" width="24" height="26" viewBox="0 0 24 26"><text x="0.5" y="13.4" font-family="Liberation Sans" font-size="16" fill="#d6d6d6">ab</text>
<text x="0.5" y="24" font-family="Liberation Sans" font-size="16" fill="#d6d6d6">c</text>
<path d="M19 14.5 C20 19 17 22 12 22.5 M14.2 19.5 L11.2 22.5 L14.2 25" fill="none" stroke="#3a87d6" stroke-width="2"/></svg>
<svg style="left:604px;top:197px;" width="30" height="30" viewBox="0 0 30 30"><rect x="0" y="0.5" width="22" height="1.4" fill="#cfcfcf"/><rect x="0" y="4.3" width="16" height="1.4" fill="#cfcfcf"/><rect x="0" y="8.1" width="22" height="1.4" fill="#cfcfcf"/><rect x="0" y="11.9" width="16" height="1.4" fill="#cfcfcf"/><rect x="0" y="15.7" width="22" height="1.4" fill="#cfcfcf"/><rect x="0" y="18" width="0" height="1.4" fill="#cfcfcf"/></svg>
<svg style="left:645px;top:197px;" width="30" height="30" viewBox="0 0 30 30"><rect x="0" y="0.5" width="22" height="1.4" fill="#cfcfcf"/><rect x="3" y="4.3" width="16" height="1.4" fill="#cfcfcf"/><rect x="0" y="8.1" width="22" height="1.4" fill="#cfcfcf"/><rect x="3" y="11.9" width="16" height="1.4" fill="#cfcfcf"/><rect x="0" y="15.7" width="22" height="1.4" fill="#cfcfcf"/></svg>
<svg style="left:686px;top:197px;" width="30" height="30" viewBox="0 0 30 30"><rect x="0" y="0.5" width="22" height="1.4" fill="#cfcfcf"/><rect x="6" y="4.3" width="16" height="1.4" fill="#cfcfcf"/><rect x="0" y="8.1" width="22" height="1.4" fill="#cfcfcf"/><rect x="6" y="11.9" width="16" height="1.4" fill="#cfcfcf"/><rect x="0" y="15.7" width="22" height="1.4" fill="#cfcfcf"/></svg>
<div style="left:721px;top:189.5px;width:2px;height:37px;background:#5e5e5e;"></div>
<svg style="left:733px;top:196px;" width="28" height="22" viewBox="0 0 28 22"><rect x="1" y="0.5" width="25" height="1.4" fill="#cfcfcf"/><rect x="12" y="4.3" width="14" height="1.4" fill="#cfcfcf"/><rect x="12" y="8.1" width="14" height="1.4" fill="#cfcfcf"/><rect x="12" y="11.9" width="14" height="1.4" fill="#cfcfcf"/><rect x="1" y="18.7" width="25" height="1.4" fill="#cfcfcf"/>
<path d="M1 9 L7 3.5 V7 H11 V11 H7 V14.5 Z" fill="#3a87d6"/></svg>
<svg style="left:774px;top:196px;" width="28" height="22" viewBox="0 0 28 22"><rect x="1" y="0.5" width="25" height="1.4" fill="#cfcfcf"/><rect x="12" y="4.3" width="14" height="1.4" fill="#cfcfcf"/><rect x="12" y="8.1" width="14" height="1.4" fill="#cfcfcf"/><rect x="12" y="11.9" width="14" height="1.4" fill="#cfcfcf"/><rect x="1" y="18.7" width="25" height="1.4" fill="#cfcfcf"/>
<path d="M11 9 L5 3.5 V7 H1 V11 H5 V14.5 Z" fill="#3a87d6"/></svg>
<svg style="left:830px;top:195px;" width="25" height="25" viewBox="0 0 25 25"><rect x="0.5" y="0.5" width="24" height="24" fill="#e6e6e6" stroke="#8a8a8a" stroke-width="1"/>
<path d="M1 6 H24 M1 19 H24 M12.5 1 V6 M12.5 19 V24" stroke="#8a8a8a" stroke-width="1"/>
<path d="M4 12.5 H21 M7 9.5 L4 12.5 L7 15.5 M18 9.5 L21 12.5 L18 15.5" fill="none" stroke="#3a87d6" stroke-width="1.4"/></svg>
<svg style="left:1046px;top:205.5px;" width="11" height="7" viewBox="0 0 11 7"><polyline points="0.9,0.9 5.5,5.1 10.1,0.9" fill="none" stroke="#f0f0f0" stroke-width="2.0"/></svg>
<svg style="left:1065.5px;top:255px;" width="17" height="17" viewBox="0 0 17 17"><path d="M1.5 13.5 V1.9 H13" fill="none" stroke="#f2f2f2" stroke-width="1.8" stroke-linecap="round"/><path d="M7 6.8 L14 13.8" stroke="#f2f2f2" stroke-width="1.8" stroke-linecap="round"/><path d="M6.2 14.3 H14.5 V6" fill="none" stroke="#f2f2f2" stroke-width="1.8"/></svg>
<div style="left:1102px;top:133px;width:238px;height:41px;background:#404040;box-sizing:border-box;border:2px solid #666666;"></div>
<div class="t" style="left:1106.60px;top:143.96px;font-size:20.87px;color:#f0f0f0;font-weight:400;transform:scaleX(0.8866);">General</div>
<svg style="left:1322px;top:152px;" width="8.5" height="5" viewBox="0 0 8.5 5"><path d="M0 0 H8.5 L4.25 5 Z" fill="#d6d6d6"/></svg>
<svg style="left:1104px;top:190px;" width="34" height="34" viewBox="0 0 34 34"><rect x="5" y="4.6" width="25" height="14.2" rx="0.8" fill="#3a7fcf"/>
<path d="M9 6.8 H25 Q25.4 8.6 27.8 9.2 V14.3 Q25.4 14.8 25 16.8 H9 Q8.6 14.8 7 14.3 V9.2 Q8.6 8.6 9 6.8 Z" fill="#ececec"/>
<circle cx="17.4" cy="11.2" r="3.6" fill="#3a7fcf"/>
<g fill="#dcae68" stroke="#3b3126" stroke-width="0.9"><ellipse cx="23.7" cy="23.6" rx="5.9" ry="2"/><ellipse cx="23.7" cy="21.1" rx="5.9" ry="2"/><ellipse cx="23.7" cy="18.6" rx="5.9" ry="2"/><ellipse cx="23.7" cy="15.6" rx="5.9" ry="2.2" fill="#e6bf76"/>
<ellipse cx="15.5" cy="28.6" rx="6" ry="2"/><ellipse cx="15.5" cy="26.1" rx="6" ry="2"/><ellipse cx="15.5" cy="23" rx="6" ry="2.2" fill="#e6bf76"/></g></svg>
<svg style="left:1148px;top:205.5px;" width="10.5" height="7" viewBox="0 0 10.5 7"><polyline points="0.9,0.9 5.25,5.1 9.6,0.9" fill="none" stroke="#f0f0f0" stroke-width="2.0"/></svg>
<div class="t" style="left:1176.5px;top:194.5px;font-size:28px;color:#d9d9d9;">%</div>
<svg style="left:1222px;top:198px;" width="14" height="18" viewBox="0 0 14 18"><circle cx="8" cy="5.5" r="4.5" fill="#d9d9d9"/><path d="M12 6 C12 12 8 16 2 17" fill="none" stroke="#d9d9d9" stroke-width="3"/></svg>
<div style="left:1254px;top:190px;width:2px;height:37px;background:#5e5e5e;"></div>
<svg style="left:1264px;top:192px;" width="30" height="30" viewBox="0 0 30 30"><path d="M4.5 8 H14.5 M9 3.5 L4.5 8 L9 12.5" fill="none" stroke="#3a87d6" stroke-width="2.4"/>
<text x="13" y="13.8" font-family="Liberation Sans" font-size="15.5" fill="#d6d6d6">.0</text>
<text x="5" y="27.2" font-family="Liberation Sans" font-size="15.5" fill="#d6d6d6">.00</text></svg>
<svg style="left:1305px;top:192px;" width="30" height="30" viewBox="0 0 30 30"><text x="4.5" y="13.8" font-family="Liberation Sans" font-size="15.5" fill="#d6d6d6">.00</text>
<path d="M3 22 H13.5 M9 17.5 L13.5 22 L9 26.5" fill="none" stroke="#3a87d6" stroke-width="2.4"/>
<text x="13" y="27.2" font-family="Liberation Sans" font-size="15.5" fill="#d6d6d6">.0</text></svg>
<svg style="left:1332.5px;top:255px;" width="17" height="17" viewBox="0 0 17 17"><path d="M1.5 13.5 V1.9 H13" fill="none" stroke="#f2f2f2" stroke-width="1.8" stroke-linecap="round"/><path d="M7 6.8 L14 13.8" stroke="#f2f2f2" stroke-width="1.8" stroke-linecap="round"/><path d="M6.2 14.3 H14.5 V6" fill="none" stroke="#f2f2f2" stroke-width="1.8"/></svg>
<svg style="left:1411px;top:130px;" width="54" height="52" viewBox="0 0 54 52"><rect x="0.5" y="0.5" width="46" height="42" fill="#e6e6e6"/>
<path d="M0.5 10.8 H46.5 M0.5 21.1 H46.5 M0.5 31.5 H46.5 M11.9 0.5 V42.5 M26 0.5 V42.5 M34.6 0.5 V42.5" stroke="#bdbdbd" stroke-width="1"/>
<rect x="12.2" y="0.5" width="13.6" height="10" fill="#d05030"/>
<rect x="12.2" y="11.2" width="17" height="9.6" fill="#3a87d6"/>
<rect x="12.2" y="21.5" width="17.7" height="9.6" fill="#d05030"/>
<rect x="12.2" y="31.8" width="11.6" height="10.5" fill="#3a87d6"/>
<rect x="24.6" y="30.6" width="28" height="20.8" fill="#e6e6e6" stroke="#333" stroke-width="1.4"/>
<text x="31" y="48" font-family="Liberation Sans" font-size="19" fill="#3a3a3a">≠</text></svg>
<svg style="left:1527px;top:129px;" width="58" height="55" viewBox="0 0 58 55"><rect x="0.5" y="0.5" width="51" height="45" fill="#e6e6e6"/>
<rect x="13" y="9.5" width="38.5" height="36" fill="#b4c7dc"/>
<path d="M0.5 9.5 H51.5 M0.5 18.5 H51.5 M0.5 27.5 H51.5 M0.5 36.5 H51.5 M12.5 0.5 V45.5 M26 0.5 V45.5 M39 0.5 V45.5" stroke="#b0b0b0" stroke-width="1"/>
<path d="M55 12 L56 19 L42 33 L37 28 Z" fill="#8a8a8a" stroke="#333" stroke-width="0.8"/>
<path d="M41 33.5 L36.5 29 L33 31 L38.5 36.5 Z" fill="#6a6a6a" stroke="#333" stroke-width="0.8"/>
<path d="M33.5 31.5 C27 33 22 44 11 52 C24 52 36 48 39 38 Z" fill="#3a87d6" stroke="#333" stroke-width="0.8"/>
<path d="M33.5 32.5 C36 33 38 35 38.5 37 C37 39 34 40 32 40 C33 37 33 35 33.5 32.5 Z" fill="#e6e6e6"/></svg>
<svg style="left:1621px;top:127px;" width="58" height="56" viewBox="0 0 58 56"><rect x="0.5" y="0.5" width="49" height="42.5" fill="#e6e6e6"/>
<rect x="13.7" y="10.5" width="22" height="21.5" fill="#b4c7dc"/>
<path d="M0.5 10.5 H49.5 M0.5 32 H49.5 M13.5 0.5 V43 M36 0.5 V43" stroke="#b0b0b0" stroke-width="1"/>
<path d="M54 13 L54.5 20 L42 34 L37 29 Z" fill="#8a8a8a" stroke="#333" stroke-width="0.8"/>
<path d="M41 34.5 L36.5 30 L33 32 L38.5 37.5 Z" fill="#6a6a6a" stroke="#333" stroke-width="0.8"/>
<path d="M33.5 32.5 C27 34 22 45 11 53 C24 53 36 49 39 39 Z" fill="#3a87d6" stroke="#333" stroke-width="0.8"/>
<path d="M33.5 33.5 C36 34 38 36 38.5 38 C37 40 34 41 32 41 C33 38 33 36 33.5 33.5 Z" fill="#e6e6e6"/></svg>
<svg style="left:1483px;top:225px;" width="11" height="7" viewBox="0 0 11 7"><polyline points="0.9,0.9 5.5,5.1 10.1,0.9" fill="none" stroke="#f0f0f0" stroke-width="2.0"/></svg>
<svg style="left:1575px;top:225px;" width="11" height="7" viewBox="0 0 11 7"><polyline points="0.9,0.9 5.5,5.1 10.1,0.9" fill="none" stroke="#f0f0f0" stroke-width="2.0"/></svg>
<svg style="left:1670px;top:225px;" width="11" height="7" viewBox="0 0 11 7"><polyline points="0.9,0.9 5.5,5.1 10.1,0.9" fill="none" stroke="#f0f0f0" stroke-width="2.0"/></svg>
<svg style="left:1727px;top:127px;" width="52" height="52" viewBox="0 0 52 52"><g fill="#e6e6e6" stroke="#9a9a9a" stroke-width="1">
<rect x="5.4" y="1.1" width="13.6" height="10"/><rect x="19" y="1.1" width="13.6" height="10"/>
<rect x="5.4" y="30.9" width="13.6" height="9.8"/><rect x="19" y="30.9" width="13.6" height="9.8"/>
<rect x="5.4" y="40.7" width="13.6" height="9.8"/><rect x="19" y="40.7" width="13.6" height="9.8"/></g>
<g fill="#b4c7dc" stroke="#9a9a9a" stroke-width="1"><rect x="25" y="15.4" width="12.8" height="11"/><rect x="37.8" y="15.4" width="12.8" height="11"/></g>
<path d="M1.4 20.9 L8.5 14 V18.5 H19.4 V23.3 H8.5 V27.8 Z" fill="#3a87d6"/></svg>
<svg style="left:1804px;top:127px;" width="56" height="52" viewBox="0 0 56 52"><g fill="#e6e6e6" stroke="#9a9a9a" stroke-width="1">
<rect x="1" y="1.1" width="13.6" height="10"/><rect x="14.6" y="1.1" width="13.6" height="10"/>
<rect x="1" y="30.9" width="13.6" height="9.8"/><rect x="14.6" y="30.9" width="13.6" height="9.8"/>
<rect x="1" y="40.7" width="13.6" height="9.8"/><rect x="14.6" y="40.7" width="13.6" height="9.8"/></g>
<path d="M11 15.4 H29 L35 20.9 L29 26.4 H11 Z" fill="#b4c7dc" stroke="#9a9a9a" stroke-width="1"/>
<path d="M27 12 C34 14 44 22 52 34 C46 26 38 18 27 12 Z M52 13 C42 16 34 24 27 35 C33 30 42 20 52 13 Z" fill="#d05030" stroke="#d05030" stroke-width="2.4" stroke-linejoin="round"/></svg>
<svg style="left:1880px;top:126px;" width="50" height="53" viewBox="0 0 50 53"><path d="M1.5 1 V10 M40.5 1 V10" stroke="#3a87d6" stroke-width="1.2"/>
<path d="M4 5.5 H38 M8.5 2 L4 5.5 L8.5 9 M33.5 2 L38 5.5 L33.5 9" fill="none" stroke="#3a87d6" stroke-width="2"/>
<path d="M2 11.5 H48 V45 H40 L36 51.5 H22 L20 45 L16 51.5 H2 Z" fill="#e6e6e6" stroke="#9a9a9a" stroke-width="1"/>
<path d="M2 20.5 H48 M2 38 H48 M14.7 11.5 V45 M27 11.5 V45 M39.5 11.5 V45" stroke="#a8a8a8" stroke-width="1"/>
<rect x="15" y="20.5" width="12" height="17.5" fill="#3a87d6"/></svg>
<svg style="left:1749px;top:225px;" width="10.6" height="7.5" viewBox="0 0 10.6 7.5"><polyline points="0.9,0.9 5.3,5.6 9.7,0.9" fill="none" stroke="#f0f0f0" stroke-width="2.0"/></svg>
<svg style="left:1823.7px;top:225px;" width="10.3" height="7.5" viewBox="0 0 10.3 7.5"><polyline points="0.9,0.9 5.15,5.6 9.4,0.9" fill="none" stroke="#f0f0f0" stroke-width="2.0"/></svg>
<svg style="left:1899.3px;top:225px;" width="10.3" height="7.5" viewBox="0 0 10.3 7.5"><polyline points="0.9,0.9 5.15,5.6 9.4,0.9" fill="none" stroke="#f0f0f0" stroke-width="2.0"/></svg>
<svg style="left:1980px;top:126px;" width="25" height="26" viewBox="0 0 25 26"><path d="M2 1.5 H22.5 V5 H8 L15.5 12.5 L8 21 H22.5 V24.5 H2 V21.5 L10.5 12.5 L2 3.5 Z" fill="#d9d9d9"/></svg>
<svg style="left:2129px;top:137.5px;" width="10" height="7" viewBox="0 0 10 7"><polyline points="0.9,0.9 5.0,5.1 9.1,0.9" fill="none" stroke="#f0f0f0" stroke-width="2.0"/></svg>
<svg style="left:1979px;top:166px;" width="26" height="27" viewBox="0 0 26 27"><rect x="0.5" y="1" width="24.5" height="24.5" fill="#e6e6e6"/><rect x="0.5" y="1" width="24.5" height="4" fill="#8a8a8a"/><path d="M12.7 9 V19.5 M7.5 14.5 L12.7 20 L18 14.5" fill="none" stroke="#3a87d6" stroke-width="2.6"/></svg>
<svg style="left:2045.6px;top:178px;" width="9.4" height="7" viewBox="0 0 9.4 7"><polyline points="0.9,0.9 4.7,5.1 8.5,0.9" fill="none" stroke="#f0f0f0" stroke-width="2.0"/></svg>
<svg style="left:1981px;top:208px;" width="24" height="24" viewBox="0 0 24 24"><g transform="rotate(-45 12 12)"><rect x="3" y="7.5" width="19" height="9.5" rx="1.5" fill="#e07585"/><rect x="1" y="7.5" width="4" height="9.5" rx="1" fill="#c8606e"/></g></svg>
<svg style="left:2067.6px;top:219px;" width="9.4" height="7" viewBox="0 0 9.4 7"><polyline points="0.9,0.9 4.7,5.1 8.5,0.9" fill="none" stroke="#f0f0f0" stroke-width="2.0"/></svg>
<svg style="left:2168px;top:129px;" width="54" height="48" viewBox="0 0 54 48"><text x="0" y="20" font-family="Liberation Sans" font-size="26" fill="#3a87d6">A</text>
<text x="1.5" y="46.5" font-family="Liberation Sans" font-size="26" fill="#9a5cc6">Z</text>
<path d="M22 13 H51 L40 25 V41 H34 V25 Z" fill="#a8a8a8"/></svg>
<svg style="left:2214.4px;top:229px;" width="10" height="7" viewBox="0 0 10 7"><polyline points="0.9,0.9 5.0,5.1 9.1,0.9" fill="none" stroke="#f0f0f0" stroke-width="2.0"/></svg>
<svg style="left:2250px;top:126px;" width="52" height="52" viewBox="0 0 52 52"><path d="M23 35 L8 48" stroke="#3a87d6" stroke-width="5" stroke-linecap="round"/><circle cx="31.3" cy="19.8" r="15" fill="#e6e6e6" stroke="#3a87d6" stroke-width="3"/></svg>
<svg style="left:2301px;top:229px;" width="10.6" height="7" viewBox="0 0 10.6 7"><polyline points="0.9,0.9 5.3,5.1 9.7,0.9" fill="none" stroke="#f0f0f0" stroke-width="2.0"/></svg>
<svg style="left:2376px;top:139px;" width="26" height="26" viewBox="0 0 26 26"><defs><radialGradient id="og"><stop offset="0.6" stop-color="#e8901a"/><stop offset="1" stop-color="#e8901a" stop-opacity="0"/></radialGradient></defs><circle cx="13" cy="12" r="10" fill="url(#og)"/></svg>
<svg style="left:2527px;top:259px;" width="20" height="13" viewBox="0 0 20 13"><polyline points="1.5,11.5 10,3 18.5,11.5" fill="none" stroke="#bdbdbd" stroke-width="1.6"/></svg>
<svg style="left:2008px;top:15px;" width="30" height="29" viewBox="0 0 30 29"><path d="M15 1.5 L28.5 27.5 H1.5 Z" fill="#e8901a" stroke="#f3cf8c" stroke-width="1.4" stroke-linejoin="round"/><rect x="13.8" y="9" width="2.4" height="11" fill="#4a3412"/><rect x="13.8" y="22" width="2.4" height="2.5" fill="#4a3412"/></svg>
<svg style="left:2222px;top:8px;" width="45" height="45" viewBox="0 0 45 45"><defs><clipPath id="av"><circle cx="22.5" cy="22.5" r="21.5"/></clipPath></defs>
<g clip-path="url(#av)"><rect width="45" height="45" fill="#b9b3a8"/><rect x="6" y="4" width="33" height="36" fill="#ded9cf"/>
<rect x="8" y="30" width="28" height="6" fill="#f2f2f2"/>
<ellipse cx="22" cy="24" rx="7" ry="8" fill="#c9a08a"/>
<path d="M14 12 C16 6 28 6 30 12 L27 17 H17 Z" fill="#8a1f1f"/>
<path d="M16 30 C18 27 30 27 34 32 L32 36 H16 Z" fill="#a01e1e"/></g></svg>
<svg style="left:2307px;top:14px;" width="26" height="20" viewBox="0 0 26 20"><rect x="1" y="1" width="24" height="18" fill="none" stroke="#f0f0f0" stroke-width="1.6"/><path d="M1 5 H25" stroke="#f0f0f0" stroke-width="1.4"/><path d="M13 17.5 V8 M9 11.5 L13 7.5 L17 11.5" fill="none" stroke="#f0f0f0" stroke-width="1.6"/></svg>
<div style="left:2380px;top:22px;width:18px;height:1.6px;background:#f0f0f0;"></div>
<svg style="left:2448px;top:14px;" width="20" height="20" viewBox="0 0 20 20"><rect x="1" y="5" width="13.5" height="13.5" rx="2" fill="none" stroke="#f0f0f0" stroke-width="1.6"/><path d="M5 2.5 V2.2 Q5 1 6.5 1 H17 Q19 1 19 3 V13.5 Q19 15 17.8 15" fill="none" stroke="#f0f0f0" stroke-width="1.6"/></svg>
<svg style="left:2516px;top:14px;" width="20" height="20" viewBox="0 0 20 20"><path d="M1 1 L19 19 M19 1 L1 19" stroke="#f0f0f0" stroke-width="1.7"/></svg>
<div style="left:2411px;top:66px;width:129px;height:42px;background:#3a3a3a;box-sizing:border-box;border:2px solid #5a5a5a;"></div>
<svg style="left:2418px;top:75px;" width="22" height="24" viewBox="0 0 22 24"><path d="M1.5 8 V22.5 H19" fill="none" stroke="#e6e6e6" stroke-width="1.6"/><path d="M5.5 17.5 C6 11 10 8 15.5 8 V4 L21 9.5 L15.5 15 V11.5 C11 11.5 8 13.5 5.5 17.5 Z" fill="none" stroke="#e6e6e6" stroke-width="1.5" stroke-linejoin="round"/></svg>
<div class="t" style="left:2448px;top:77px;font-size:22.5px;font-weight:700;color:#f0f0f0;transform:scaleX(0.97)">Share</div>
<svg style="left:2521.6px;top:84.5px;" width="9" height="6.5" viewBox="0 0 9 6.5"><polyline points="0.675,0.675 4.5,4.825 8.325,0.675" fill="none" stroke="#e6e6e6" stroke-width="1.5"/></svg>
<svg style="left:1124px;top:72px;" width="26" height="31" viewBox="0 0 26 31"><path d="M8 21 C8 17 3 14 3 9 A10 10 0 0 1 23 9 C23 14 18 17 18 21 Z" fill="none" stroke="#d6d6d6" stroke-width="1.6"/><path d="M8.5 24 H17.5 M9.5 27.5 H16.5" stroke="#d6d6d6" stroke-width="1.6"/></svg>
<svg style="left:165px;top:312.5px;" width="13" height="6.5" viewBox="0 0 13 6.5"><path d="M0 0 H13 L6.5 6.5 Z" fill="#e6e6e6"/></svg>
<svg style="left:213px;top:307px;" width="5" height="20" viewBox="0 0 5 20"><rect x="0" y="0.5" width="4.2" height="4.2" fill="#fff"/><rect x="0" y="7.5" width="4.2" height="4.2" fill="#fff"/><rect x="0" y="14.5" width="4.2" height="4.2" fill="#fff"/></svg>
<svg style="left:264px;top:306px;" width="23" height="22" viewBox="0 0 23 22"><path d="M2.5 19.5 C8 12 14 6 20.5 2.5 M3 3 C9 8 15 14 20.5 20" fill="none" stroke="#7a7a7a" stroke-width="2.6" stroke-linecap="round"/></svg>
<svg style="left:327px;top:306px;" width="25" height="22" viewBox="0 0 25 22"><path d="M2.5 11.5 L9.5 18.5 L22 3" fill="none" stroke="#7a7a7a" stroke-width="3.6" stroke-linecap="round" stroke-linejoin="round"/></svg>
<div class="t" style="left:388px;top:299.5px;font-size:31px;font-family:'Liberation Serif';font-style:italic;color:#f0f0f0;">fx</div>
<svg style="left:2527px;top:308px;" width="20" height="14" viewBox="0 0 20 14"><polyline points="2.5,11 10,3.5 17.5,11" fill="none" stroke="#ffffff" stroke-width="3"/></svg>
<svg style="left:1549px;top:693px;" width="36" height="36" viewBox="0 0 36 36"><rect x="0" y="0" width="36" height="36" fill="#333"/>
<rect x="5.5" y="6" width="23" height="7.5" fill="#000" stroke="#8a8a8a" stroke-width="1"/>
<rect x="6" y="6.5" width="11" height="6.5" fill="#3a7ff0"/>
<rect x="5.5" y="13.5" width="11.5" height="7" fill="#000" stroke="#8a8a8a" stroke-width="1"/>
<path d="M5.5 21 V28 H17 V21" fill="none" stroke="#9a9a7a" stroke-width="1" stroke-dasharray="1 1.2"/>
<path d="M25 20 V30 M20 25 H30" stroke="#8a8a8a" stroke-width="2.8"/></svg>
<svg style="left:105px;top:1484px;" width="28" height="28" viewBox="0 0 28 28"><path d="M12 5 A9 9 0 1 0 20 17" fill="none" stroke="#e0e0e0" stroke-width="1.7" stroke-dasharray="3 2.2"/>
<path d="M13 1 V11 M10 8 L13 11 L16 8" fill="none" stroke="#e0e0e0" stroke-width="1.6"/>
<path d="M17 11 H23 M20.5 8.5 L23 11 L20.5 13.5" fill="none" stroke="#e0e0e0" stroke-width="1.6"/>
<path d="M15 21.5 L18.5 25 L25.5 17.5" fill="none" stroke="#e0e0e0" stroke-width="2"/></svg>
<svg style="left:2054px;top:1483px;" width="25" height="25" viewBox="0 0 25 25"><rect x="1.5" y="1.5" width="21.5" height="22" fill="none" stroke="#e6e6e6" stroke-width="1.5"/><path d="M8.7 1.5 V23.5 M15.8 1.5 V23.5 M1.5 8.8 H23 M1.5 16.2 H23" stroke="#e6e6e6" stroke-width="1.5"/></svg>
<svg style="left:2125px;top:1484px;" width="26" height="24" viewBox="0 0 26 24"><rect x="1" y="1" width="23" height="21.5" fill="none" stroke="#e6e6e6" stroke-width="1.5"/><rect x="6" y="4.5" width="13" height="14.5" fill="none" stroke="#e6e6e6" stroke-width="1.5"/><path d="M9 8.5 H16 M9 11.5 H16 M9 14.5 H16" stroke="#e6e6e6" stroke-width="1.3"/></svg>
<svg style="left:2196px;top:1484px;" width="26" height="24" viewBox="0 0 26 24"><rect x="1" y="1" width="23" height="21.5" fill="none" stroke="#e6e6e6" stroke-width="1.5"/><rect x="1.5" y="1.5" width="7" height="12.5" fill="#e6e6e6"/><rect x="10.5" y="1.5" width="7" height="12.5" fill="#e6e6e6"/></svg>
</body></html>
